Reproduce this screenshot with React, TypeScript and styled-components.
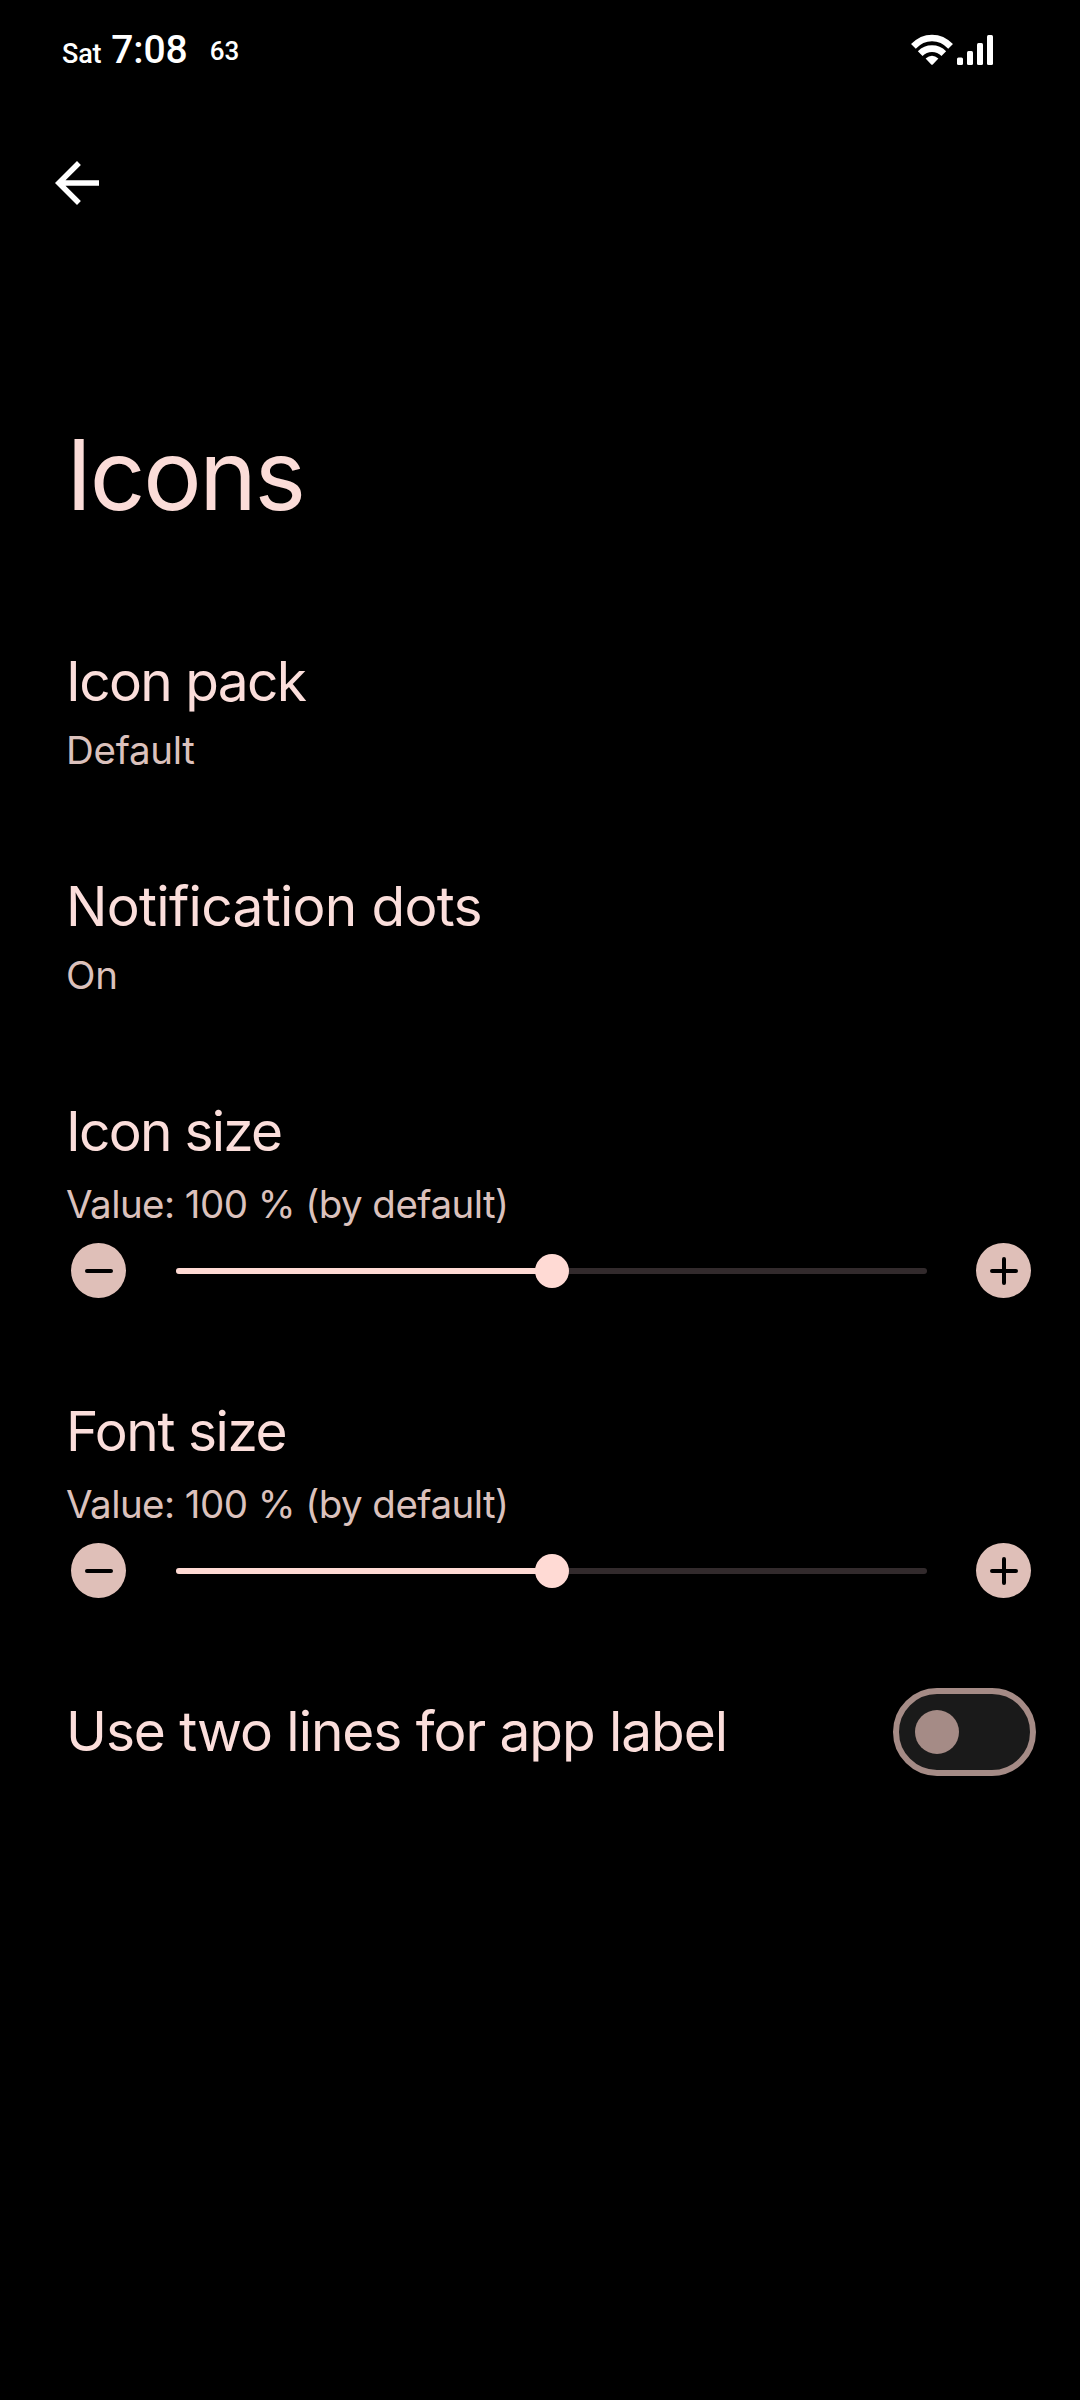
import React, { useState } from "react";
import styled, { createGlobalStyle } from "styled-components";

const GlobalStyle = createGlobalStyle`
  * { box-sizing: border-box; }
  body { margin: 0; background: #000; }
`;

const Screen = styled.div`
  width: 1080px;
  height: 2400px;
  overflow: hidden;
  background: #000;
  display: flex;
  flex-direction: column;
  font-family: Inter, "Open Sans", sans-serif;
  color: #fbdedb;
`;

const StatusBar = styled.header`
  height: 100px;
  padding: 20px 86px 0 62px;
  display: flex;
  justify-content: space-between;
  align-items: flex-start;
  color: #fff;
  font-family: Roboto, sans-serif;
  font-weight: 500;
`;

const StatusGroup = styled.div`
  display: flex;
  align-items: baseline;
  line-height: 60px;
  white-space: nowrap;
`;

const Day = styled.span`
  font-size: 27px;
  letter-spacing: -0.2px;
  margin-right: 10px;
`;

const Clock = styled.span`
  font-size: 39px;
  letter-spacing: -0.1px;
  margin-right: 22px;
`;

const Battery = styled.span`
  font-size: 26px;
  font-weight: 500;
  line-height: 26px;
  align-self: flex-start;
  margin-top: 18px;
`;

const SignalIcons = styled.div`
  display: flex;
  padding-top: 14px;
  gap: 4px;
`;

const NavBar = styled.nav`
  height: 166px;
  padding: 50px 0 0 44px;
`;

const BackButton = styled.button`
  display: flex;
  padding: 0;
  border: 0;
  background: none;
  color: #fff;
`;

const PageTitle = styled.h1`
  margin: 150px 0 84px;
  padding-left: 66px;
  font-size: 97.6px;
  line-height: 118px;
  font-weight: 400;
  letter-spacing: -2.4px;
  color: #fbdcd8;
`;

const Row = styled.section<{ $height: number }>`
  height: ${(p) => p.$height}px;
  padding: 30px 44px 0 66px;
  display: flex;
  flex-direction: column;
`;

const SwitchRow = styled.section`
  height: 128px;
  padding: 0 44px 0 66px;
  display: flex;
  align-items: center;
  justify-content: space-between;
`;

const Label = styled.div<{ $track: number }>`
  font-size: 55px;
  line-height: 66px;
  letter-spacing: ${(p) => p.$track}px;
  white-space: nowrap;
`;

const SwitchLabel = styled(Label)`
  padding-bottom: 2px;
`;

const Summary = styled.div<{ $track: number; $gap: number }>`
  margin-top: ${(p) => p.$gap}px;
  font-size: 38.5px;
  line-height: 46px;
  letter-spacing: ${(p) => p.$track}px;
  color: #dbc1bc;
  white-space: nowrap;
`;

const SliderRow = styled.div`
  margin-top: 16px;
  height: 55px;
  padding: 0 5px;
  display: flex;
  align-items: center;
`;

const StepButton = styled.button`
  width: 55px;
  height: 55px;
  padding: 0;
  border: 0;
  border-radius: 50%;
  background: #dfbfb8;
  color: #000;
  display: flex;
  align-items: center;
  justify-content: center;
`;

const Track = styled.div`
  flex: 1;
  height: 6px;
  margin: 0 49px 0 50px;
  border-radius: 3px;
  background: #322a2c;
  display: flex;
  align-items: center;
`;

const Fill = styled.div`
  height: 6px;
  border-radius: 3px;
  background: #ffdad4;
`;

const Thumb = styled.div`
  flex: none;
  width: 34px;
  height: 34px;
  margin-left: -17px;
  border-radius: 50%;
  background: #ffdad4;
`;

const Switch = styled.button<{ $on: boolean }>`
  width: 143px;
  height: 88px;
  padding: 0 16px;
  border: 6px solid #a58b86;
  border-radius: 44px;
  background: #1a1a1a;
  display: flex;
  align-items: center;
  justify-content: ${(p) => (p.$on ? "flex-end" : "flex-start")};
`;

const SwitchThumb = styled.span`
  width: 44px;
  height: 44px;
  border-radius: 50%;
  background: #a58b86;
`;

function WifiIcon() {
  return (
    <svg width="42" height="32" viewBox="0 0 42 32">
      <g fill="none" stroke="#fff" strokeWidth="6.6">
        <path d="M2.4 12.4Q10.5 4 21 4T39.6 12.4" />
        <path d="M9.2 19.6Q14.2 14.6 21 14.6T32.8 19.6" />
      </g>
      <path
        d="M14.6 24.6Q21 18.8 27.4 24.6L22 30.2Q21 31.2 20 30.2Z"
        fill="#fff"
      />
    </svg>
  );
}

function CellIcon() {
  return (
    <svg width="37" height="32" viewBox="0 0 37 32" fill="#fff">
      <rect x="0" y="23.5" width="6" height="7.5" rx="1.5" />
      <rect x="10" y="17" width="6" height="14" rx="1.5" />
      <rect x="20" y="9" width="6" height="22" rx="1.5" />
      <rect x="30" y="1" width="6" height="30" rx="1.5" />
    </svg>
  );
}

function StepIcon({ plus }: { plus?: boolean }) {
  return (
    <svg width="28" height="28" viewBox="0 0 28 28">
      <path
        d={plus ? "M2 14H26M14 2V26" : "M2 14H26"}
        stroke="currentColor"
        strokeWidth="4"
        strokeLinecap="round"
      />
    </svg>
  );
}

interface SliderProps {
  label: string;
  track: number;
}

function SliderSetting({ label, track }: SliderProps) {
  const [value, setValue] = useState(100);
  const step = (d: number) =>
    setValue((v) => Math.min(150, Math.max(50, v + d)));
  const suffix = value === 100 ? " (by default)" : "";
  return (
    <Row $height={300}>
      <Label $track={track}>{label}</Label>
      <Summary $track={-0.55} $gap={17}>
        {`Value: ${value} %${suffix}`}
      </Summary>
      <SliderRow>
        <StepButton aria-label="Decrease" onClick={() => step(-5)}>
          <StepIcon />
        </StepButton>
        <Track>
          <Fill style={{ width: `${value - 50}%` }} />
          <Thumb />
        </Track>
        <StepButton aria-label="Increase" onClick={() => step(5)}>
          <StepIcon plus />
        </StepButton>
      </SliderRow>
    </Row>
  );
}

export default function App() {
  const [twoLines, setTwoLines] = useState(false);
  return (
    <>
      <GlobalStyle />
      <Screen>
        <StatusBar>
          <StatusGroup>
            <Day>Sat</Day>
            <Clock>7:08</Clock>
            <Battery>63</Battery>
          </StatusGroup>
          <SignalIcons>
            <WifiIcon />
            <CellIcon />
          </SignalIcons>
        </StatusBar>
        <NavBar>
          <BackButton aria-label="Back">
            <svg width="66" height="66" viewBox="0 0 24 24" fill="currentColor">
              <path d="M20 11H7.83l5.59-5.59L12 4l-8 8 8 8 1.41-1.41L7.83 13H20v-2z" />
            </svg>
          </BackButton>
        </NavBar>
        <PageTitle>Icons</PageTitle>
        <Row $height={225}>
          <Label $track={-1.6}>Icon pack</Label>
          <Summary $track={-0.3} $gap={13}>Default</Summary>
        </Row>
        <Row $height={225}>
          <Label $track={-0.7}>Notification dots</Label>
          <Summary $track={-0.3} $gap={13}>On</Summary>
        </Row>
        <SliderSetting label="Icon size" track={-1.75} />
        <SliderSetting label="Font size" track={-1.45} />
        <SwitchRow>
          <SwitchLabel $track={-1.05}>Use two lines for app label</SwitchLabel>
          <Switch
            $on={twoLines}
            role="switch"
            aria-checked={twoLines}
            aria-label="Use two lines for app label"
            onClick={() => setTwoLines(!twoLines)}
          >
            <SwitchThumb />
          </Switch>
        </SwitchRow>
      </Screen>
    </>
  );
}
